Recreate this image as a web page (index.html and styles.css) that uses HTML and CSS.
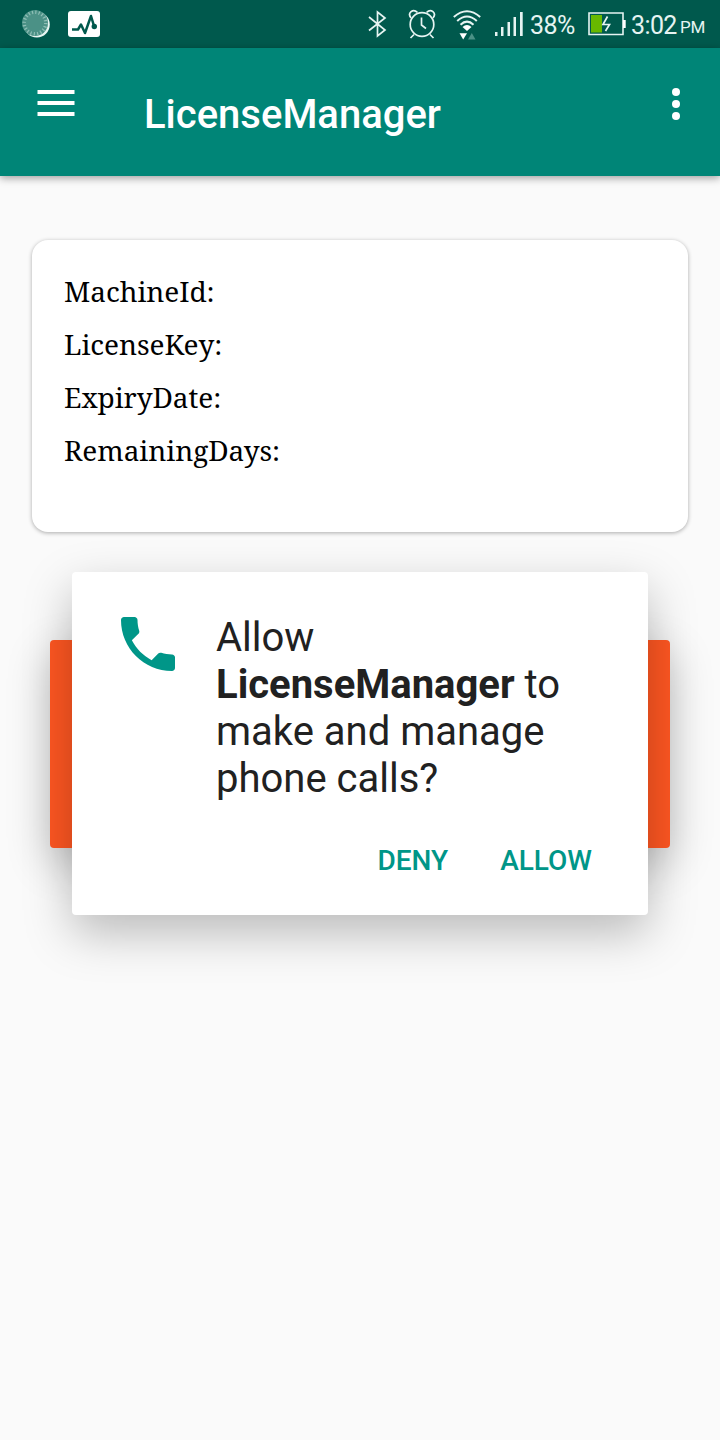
FILE: index.html
```html
<!DOCTYPE html>
<html lang="en">
<head>
<meta charset="utf-8">
<title>LicenseManager</title>
<link rel="stylesheet" href="styles.css">
</head>
<body>
<div class="screen">
  <header class="status-bar">
    <div class="notifications">
      <svg width="30" height="30" viewBox="0 0 30 30">
        <circle cx="14.8" cy="14.6" r="13" fill="#e8f5f2"/>
        <circle cx="13" cy="13" r="13" fill="#4b9186"/>
        <circle cx="13" cy="13" r="10.8" fill="none" stroke="#8fbfb6" stroke-width="3.500" stroke-dasharray="1.200 2.190"/>
      </svg>
      <svg width="32" height="26" viewBox="0 0 32 26">
        <rect width="32" height="26" rx="3" fill="#fff"/>
        <path d="M4 18.500h6l3-5 4 8.500L23 5l3 10" fill="none" stroke="#00594d" stroke-width="2.500" stroke-linejoin="round"/>
        <circle cx="26.300" cy="15.500" r="2.700" fill="#00594d"/>
      </svg>
    </div>
    <div class="indicators">
      <svg class="bluetooth" width="20" height="28" viewBox="0 0 20 28" fill="none" stroke="#e6f4f2" stroke-width="1.700">
        <path d="M1 7l16 13-7.500 6V2L17 8 1 20.500"/>
      </svg>
      <svg class="alarm" width="28" height="30" viewBox="0 0 28 30" fill="none" stroke="#e6f4f2" stroke-width="1.700">
        <circle cx="14" cy="15.500" r="11.800"/>
        <path d="M13.500 8.500v7.500l4.500 3.500M6 25.500l-3.500 3.500M22 25.500l3.500 3.500M3 9C-1 4 5-1 9.500 3.500M25 9C29 4 23-1 18.500 3.500"/>
      </svg>
      <svg class="wifi" width="28" height="30" viewBox="0 0 28 30" fill="none" stroke="#e6f4f2" stroke-width="2">
        <path d="M.8 7Q14-4.500 27.200 7M4.200 11Q14 2 23.800 11M7.500 14.700Q14 8.500 20.500 14.700"/>
        <path d="M9.500 17q4.500-4 9 0L14 21z" fill="#fff" stroke="none"/>
        <path d="M6.500 23.200h7.500L10.200 29.500z" fill="#fff" stroke="none"/>
        <path d="M15 29.500h7.500L18.800 23z" fill="#4b9186" stroke="none"/>
      </svg>
      <svg class="signal" width="28" height="24" viewBox="0 0 28 24" fill="#e6f4f2">
        <path d="M0 20h2.500v4H0zM6 15h2.500v9H6zM12.500 10H15v14h-2.500zM18.500 5H21v19h-2.500zM25 0h2.700v24H25z"/>
      </svg>
      <span class="percent">38%</span>
      <svg class="battery" width="38" height="24" viewBox="0 0 38 24">
        <path d="M1 1h34v21.500H1z" fill="none" stroke="#e6f4f2" stroke-width="1.600"/>
        <path d="M35 8h2.700v8H35z" fill="#fff"/>
        <path d="M3 3h11v17.500H3z" fill="#68b800"/>
        <path d="M19.500 4.500l-4.500 8h6.500l-4 6.500" fill="none" stroke="#e6f4f2" stroke-width="1.700"/>
      </svg>
      <span class="clock">3:02</span><span class="meridiem">PM</span>
    </div>
  </header>
  <nav class="app-bar">
    <svg class="menu" width="38" height="26" viewBox="0 0 38 26" fill="#fff"><path d="M.5 0h37v4H.5zM.5 11h37v4H.5zM.5 22h37v4H.5z"/></svg>
    <h1 class="title">LicenseManager</h1>
    <svg class="more" width="8" height="32" viewBox="0 0 8 32" fill="#fff"><circle cx="4" cy="4" r="4"/><circle cx="4" cy="16" r="4"/><circle cx="4" cy="28" r="4"/></svg>
  </nav>
  <main class="content">
    <section class="card">
      <p>MachineId:</p>
      <p>LicenseKey:</p>
      <p>ExpiryDate:</p>
      <p>RemainingDays:</p>
    </section>
    <div class="panel"></div>
  </main>
  <div class="dialog" role="dialog">
    <div class="message">
      <svg class="phone" width="54" height="54" viewBox="3 3 18 18" fill="#009688"><path d="M6.620 10.790c1.440 2.830 3.760 5.140 6.590 6.590l2.200-2.200c.27-.27.670-.36 1.020-.24 1.120.37 2.330.57 3.570.57.550 0 1 .45 1 1V20c0 .55-.45 1-1 1-9.390 0-17-7.610-17-17 0-.55.45-1 1-1h3.500c.55 0 1 .45 1 1 0 1.250.2 2.450.57 3.570.11.350.03.740-.25 1.020z"/></svg>
      <p class="question">Allow<br><b>LicenseManager</b> to<br>make and manage<br>phone calls?</p>
    </div>
    <div class="actions"><span>DENY</span><span>ALLOW</span></div>
  </div>
</div>
</body>
</html>
```
FILE: styles.css
```css
* { box-sizing: border-box; }
body, p, h1 { margin: 0; }
body { background: #fafafa; font-family: Roboto, sans-serif; }
svg { display: block; flex: none; }
.screen { position: relative; height: 1440px; overflow: hidden; }
.status-bar {
  display: flex; justify-content: space-between;
  height: 48px; padding: 0 16px 0 22px;
  background: #00594d; color: #e6f4f2;
}
.notifications { display: flex; gap: 16px; padding-top: 11px; }
.notifications svg:first-child { margin-top: -1px; }
.indicators { display: flex; align-items: center; white-space: nowrap; }
.alarm { margin-left: 20px; }
.wifi { margin: 2px 0 0 17px; }
.signal { margin-left: 14px; }
.percent { width: 45px; margin: 2px 13px 0 7px; font-size: 25px; letter-spacing: -.6px; }
.battery { margin-right: 5px; }
.clock { width: 46px; margin-top: 2px; font-size: 25px; letter-spacing: -.6px; }
.meridiem { width: 24px; margin: 5px 0 0 3px; font-size: 17px; letter-spacing: -.3px; }
.app-bar {
  position: relative; display: flex; align-items: flex-start;
  height: 128px; padding: 0 40px 0 37px;
  background: #008577; box-shadow: 0 2px 8px rgba(0,0,0,.38);
}
.menu { margin-top: 42px; }
.title { margin: 43px auto 0 69px; color: #fff; font-size: 40px; font-weight: 500; line-height: 48px; }
.more { margin-top: 40px; }
.content { padding: 64px 32px 0; }
.card {
  height: 292px; padding: 25px 32px;
  background: #fff; border-radius: 16px;
  box-shadow: 0 1px 4px rgba(0,0,0,.32);
  color: #000;
  font: 28px/53px "Noto Serif", "Droid Serif", "DejaVu Serif Condensed", serif;
  letter-spacing: -.05px;
}
.panel {
  height: 208px; margin: 108px 18px 0;
  background: #ff5722; border-radius: 4px;
  box-shadow: 0 14px 44px rgba(0,0,0,.24);
}
.dialog {
  position: absolute; top: 572px; left: 72px;
  width: 576px; height: 343px; padding: 42px 48px 0;
  background: #fff; border-radius: 4px;
  box-shadow: 0 18px 48px rgba(0,0,0,.26);
}
.message { display: flex; gap: 41px; }
.phone { margin: 3px 0 0 1px; }
.question { color: #212121; font-size: 40px; line-height: 47px; white-space: nowrap; }
.actions { display: flex; justify-content: flex-end; gap: 52px; margin: 42px 8px 0 0; color: #009688; font-size: 28px; font-weight: 500; line-height: 34px; }
```
